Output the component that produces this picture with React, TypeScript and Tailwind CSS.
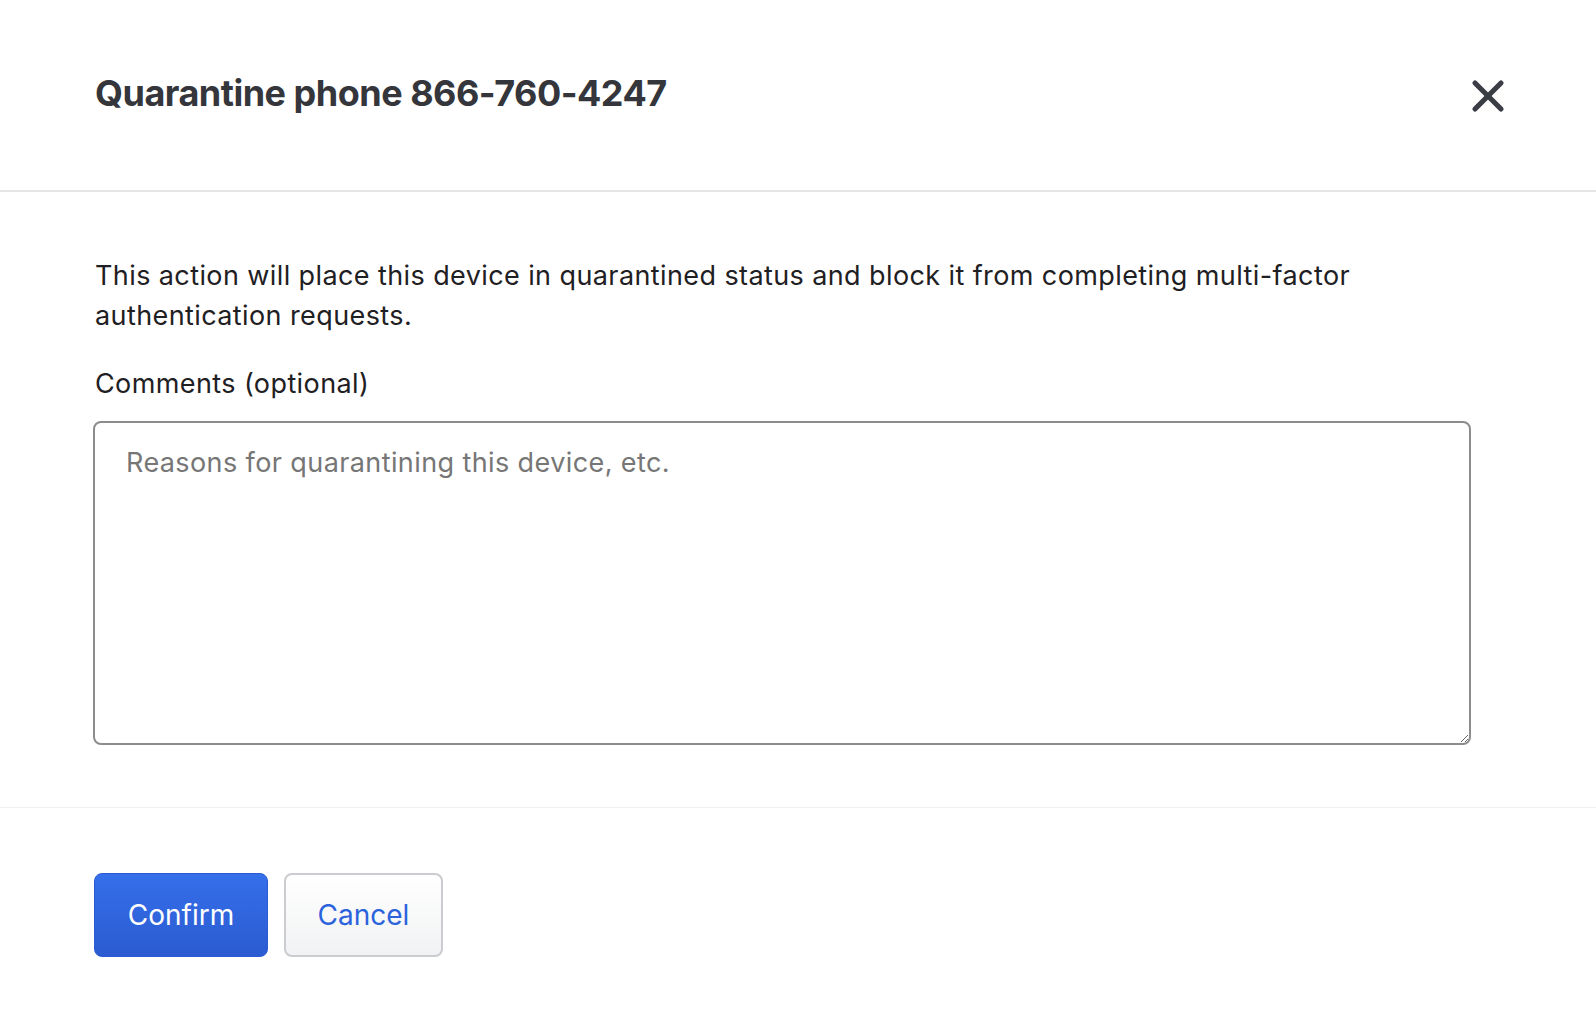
import { X } from "lucide-react";

export default function App() {
  return (
    <div className="min-h-screen bg-white font-['Inter',sans-serif] text-[#1f2023]">
      {/* header */}
      <div className="flex h-[192px] items-start justify-between border-b-2 border-[#e6e6e9] pl-[95px] pr-[82px] pt-[70px]">
        <h1 className="text-[36px] font-bold leading-[46px] tracking-[-0.5px] text-[#34363c]">
          Quarantine phone 866-760-4247
        </h1>
        <button className="text-[#3a3d44]" aria-label="Close">
          <X className="h-[52px] w-[52px]" strokeWidth={2.4} />
        </button>
      </div>

      {/* body */}
      <div className="border-b border-[#f1f1f3] pl-[95px] pr-[100px] pb-[62px] pt-[64px]">
        <p className="max-w-[1380px] text-[27px] leading-[40px] tracking-[0.4px]">
          This action will place this device in quarantined status and block it from completing multi-factor
          authentication requests.
        </p>
        <label className="mt-[28px] block text-[27px] leading-[40px] tracking-[0.4px]">Comments (optional)</label>
        <textarea
          className="-ml-[2px] mt-[17px] block h-[324px] w-[1378px] rounded-[8px] border-2 border-[#8c8c8e] px-[31px] py-[20px] text-[27px] leading-[40px] tracking-[0.4px] outline-none placeholder:text-[#767676]"
          placeholder="Reasons for quarantining this device, etc."
        />
      </div>

      {/* footer */}
      <div className="flex gap-[16px] pl-[94px] pt-[65px]">
        <button className="h-[84px] w-[174px] rounded-[8px] border border-[#2a5bd4] bg-gradient-to-b from-[#356fea] to-[#2b5bd1] text-[28px] text-white">
          Confirm
        </button>
        <button className="h-[84px] w-[159px] rounded-[8px] border-2 border-[#cbccd0] bg-gradient-to-b from-white to-[#f1f2f3] text-[28px] text-[#2c63dc]">
          Cancel
        </button>
      </div>
    </div>
  );
}
